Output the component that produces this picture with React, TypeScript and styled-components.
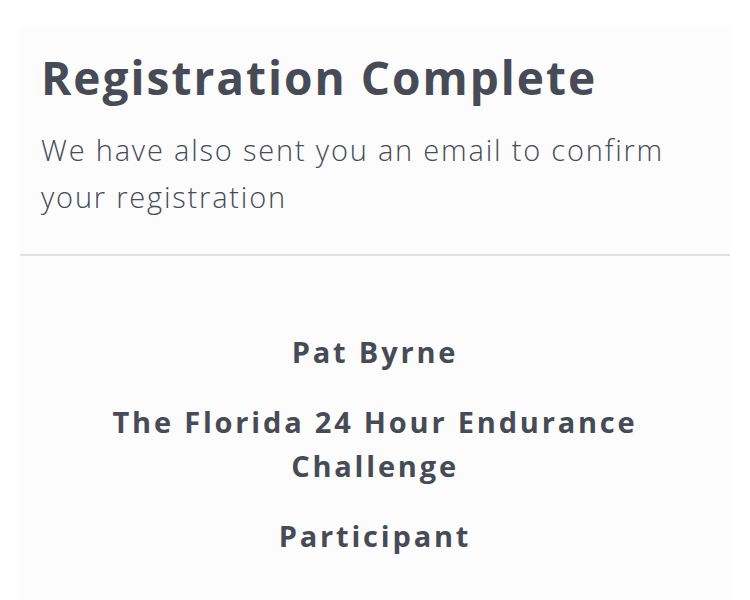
import styled, { createGlobalStyle } from "styled-components";

const GlobalStyle = createGlobalStyle`
  html, body {
    margin: 0;
    padding: 0;
    background: #ffffff;
  }
  body {
    font-family: "Open Sans", "Noto Sans", sans-serif;
    color: #464b55;
  }
`;

const Page = styled.div`
  padding: 27px 20px 0 20px;
  height: 600px;
  box-sizing: border-box;
`;

const Card = styled.div`
  background: #fcfcfd;
  height: 100%;
  display: flex;
  flex-direction: column;
`;

const Header = styled.div`
  padding: 24px 21px 34px 21px;
  border-bottom: 2px solid #e0e0e2;
`;

const Title = styled.h1`
  margin: 0;
  font-size: 46px;
  font-weight: 700;
  letter-spacing: 2px;
  line-height: 52px;
`;

const Subtitle = styled.p`
  margin: 23px 0 0 0;
  font-size: 29px;
  font-weight: 300;
  line-height: 47px;
  letter-spacing: 1.8px;
`;

const Body = styled.div`
  padding: 74px 60px 0 60px;
  display: flex;
  flex-direction: column;
  align-items: center;
  gap: 26px;
  text-align: center;
`;

const Line = styled.div`
  font-size: 29px;
  font-weight: 700;
  line-height: 44px;
  letter-spacing: 2.8px;
`;

export default function App() {
  return (
    <>
      <GlobalStyle />
      <Page>
        <Card>
          <Header>
            <Title>Registration Complete</Title>
            <Subtitle>
              We have also sent you an email to confirm your registration
            </Subtitle>
          </Header>
          <Body>
            <Line>Pat Byrne</Line>
            <Line>The Florida 24 Hour Endurance Challenge</Line>
            <Line>Participant</Line>
          </Body>
        </Card>
      </Page>
    </>
  );
}
